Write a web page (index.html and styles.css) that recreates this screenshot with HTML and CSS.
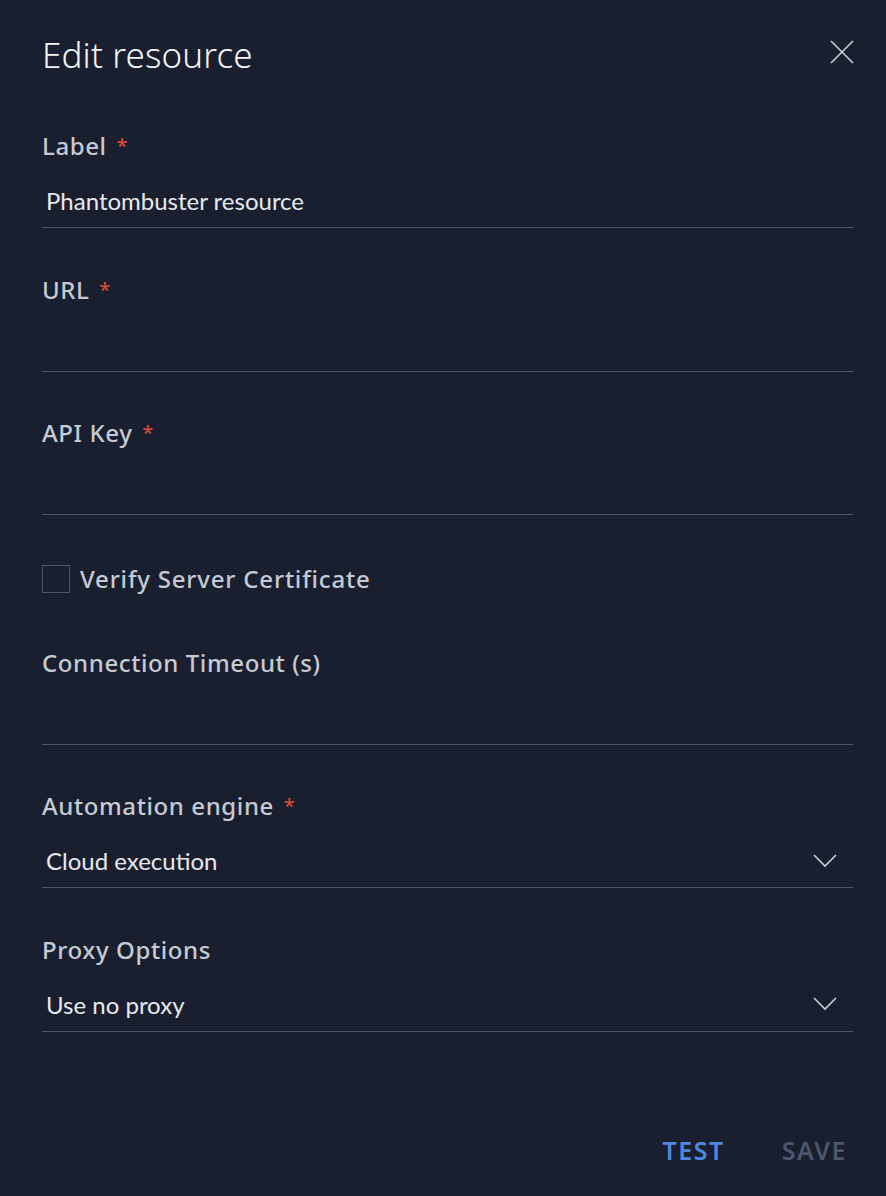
FILE: index.html
```html
<!DOCTYPE html>
<html>
<head>
<meta charset="utf-8">
<link rel="stylesheet" href="styles.css">
</head>
<body>
<div class="dialog">
  <header class="head">
    <h1 class="title">Edit resource</h1>
    <button class="close" aria-label="Close">
      <svg width="24" height="24" viewBox="0 0 24 24"><path d="M1 1 L23 23 M23 1 L1 23" stroke="#c9ced8" stroke-width="1.6" fill="none"/></svg>
    </button>
  </header>

  <div class="field">
    <div class="label">Label <span class="req">*</span></div>
    <div class="input">Phantombuster resource</div>
  </div>

  <div class="field">
    <div class="label">URL <span class="req">*</span></div>
    <div class="input"></div>
  </div>

  <div class="field">
    <div class="label">API Key <span class="req">*</span></div>
    <div class="input"></div>
  </div>

  <label class="check">
    <span class="box"></span>
    <span class="check-text">Verify Server Certificate</span>
  </label>

  <div class="field">
    <div class="label">Connection Timeout (s)</div>
    <div class="input"></div>
  </div>

  <div class="field">
    <div class="label">Automation engine <span class="req">*</span></div>
    <div class="input select">
      <span>Cloud execution</span>
      <svg class="chev" width="24" height="14" viewBox="0 0 24 14"><path d="M1 1 L12 12 L23 1" stroke="#c9ced8" stroke-width="1.6" fill="none"/></svg>
    </div>
  </div>

  <div class="field">
    <div class="label">Proxy Options</div>
    <div class="input select">
      <span>Use no proxy</span>
      <svg class="chev" width="24" height="14" viewBox="0 0 24 14"><path d="M1 1 L12 12 L23 1" stroke="#c9ced8" stroke-width="1.6" fill="none"/></svg>
    </div>
  </div>

  <footer class="actions">
    <button class="btn test">TEST</button>
    <button class="btn save">SAVE</button>
  </footer>
</div>
</body>
</html>
```
FILE: styles.css
```css
html, body {
  margin: 0;
  padding: 0;
  background: #1a1f30;
}
body {
  font-family: "Noto Sans", sans-serif;
  color: #c5cad3;
}
.dialog {
  width: 886px;
  height: 1196px;
  box-sizing: border-box;
  padding: 28px 33px 0 42px;
  display: flex;
  flex-direction: column;
}
.head {
  display: flex;
  align-items: center;
  justify-content: space-between;
  height: 52px;
  margin-bottom: 51px;
}
.title {
  margin: 0;
  font-size: 35px;
  font-weight: 300;
  color: #f2f4f7;
  letter-spacing: 0.15px;
}
.close {
  background: none;
  border: 0;
  padding: 0;
  margin-right: -1px;
  margin-top: -4px;
  width: 24px;
  height: 24px;
  display: flex;
}
.field {
  display: flex;
  flex-direction: column;
  margin-bottom: 46.5px;
}
.label {
  height: 30px;
  line-height: 30px;
  font-size: 24px;
  font-weight: 500;
  letter-spacing: 0.6px;
  color: #c5cad3;
}
.req {
  color: #d9483b;
  margin-left: 3px;
  font-size: 20px;
  vertical-align: 2px;
}
.input {
  box-sizing: border-box;
  margin-top: 19px;
  height: 48px;
  border-bottom: 1px solid #4a5670;
  padding: 0 0 6px 4px;
  display: flex;
  align-items: center;
  font-family: Lato, "Noto Sans", sans-serif;
  font-size: 24px;
  font-weight: 400;
  color: #e6e9ee;
}
.select {
  justify-content: space-between;
  padding-right: 16px;
}
.chev {
  display: block;
}
.check {
  display: flex;
  align-items: center;
  height: 30px;
  margin-top: 2px;
  margin-bottom: 54px;
}
.box {
  width: 26px;
  height: 26px;
  border: 1px solid #4a5670;
  margin-right: 10px;
}
.check-text {
  font-size: 24px;
  font-weight: 500;
  letter-spacing: 0.8px;
  color: #c5cad3;
}
.actions {
  margin-top: auto;
  margin-bottom: 26px;
  display: flex;
  justify-content: flex-end;
  gap: 57px;
  padding-right: 6px;
}
.btn {
  background: none;
  border: 0;
  padding: 0;
  font-family: "Noto Sans", sans-serif;
  font-size: 25px;
  font-weight: 600;
  letter-spacing: 1.5px;
  height: 40px;
}
.test { color: #4f86e0; }
.save { color: #4b566f; }
```
